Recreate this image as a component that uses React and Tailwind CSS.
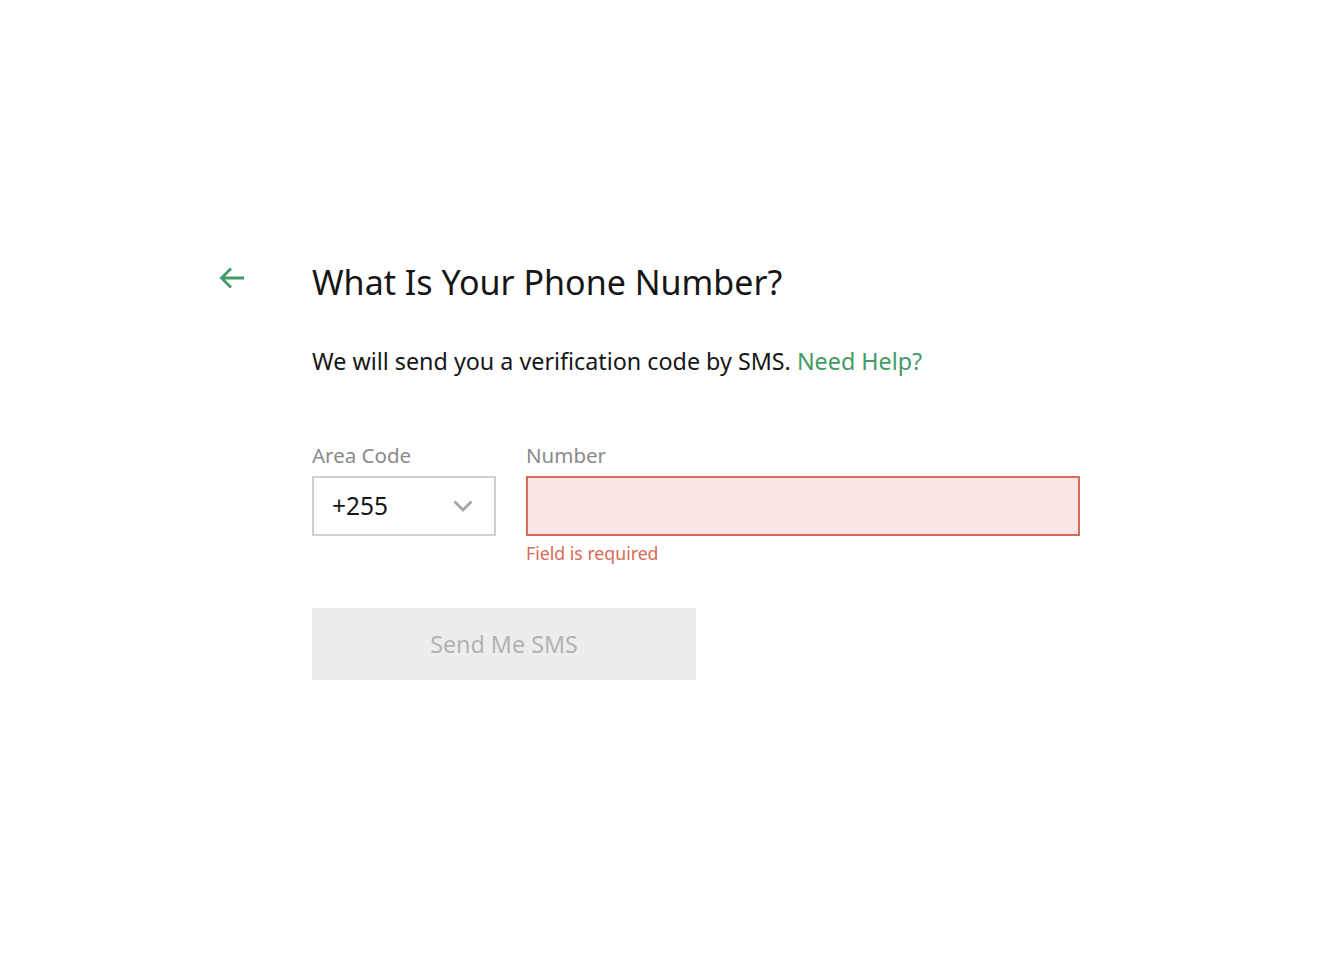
import React from 'react';

export default function App() {
  return (
    <div className="min-h-[956px] w-full bg-white font-['Noto_Sans',sans-serif]">
      <div className="flex pt-[262px] pl-[218px]">
        {/* Back arrow */}
        <button className="w-[94px] h-[30px] flex items-start pt-[3px] text-[#429b66]">
          <svg width="28" height="26" viewBox="0 0 28 26" fill="none">
            <path d="M26 13H4M13 3.5L3.5 13l9.5 9.5" stroke="currentColor" strokeWidth="2.8" />
          </svg>
        </button>

        <div className="flex flex-col">
          <h1 className="text-[34px] leading-[40px] text-[#161616]">What Is Your Phone Number?</h1>
          <p className="mt-[44px] text-[23.3px] leading-[30px] text-[#161616]">
            We will send you a verification code by SMS. <a className="text-[#429b66]">Need Help?</a>
          </p>

          <div className="mt-[66px] flex gap-[30px]">
            <div className="flex flex-col">
              <label className="text-[20.5px] leading-[26px] text-[#8a8a8a]">Area Code</label>
              <div className="mt-[8px] w-[184px] h-[60px] border-2 border-[#d0d0d0] flex items-center justify-between pl-[18px] pr-[21px]">
                <span className="text-[24.5px] text-[#161616]">+255</span>
                <svg width="20" height="12" viewBox="0 0 20 12" fill="none">
                  <path d="M1.5 1.5l8.5 8.5 8.5-8.5" stroke="#a6a6a6" strokeWidth="2.8" />
                </svg>
              </div>
            </div>
            <div className="flex flex-col">
              <label className="text-[20.5px] leading-[26px] text-[#8a8a8a]">Number</label>
              <input className="mt-[8px] w-[554px] h-[60px] border-2 border-[#d66b57] bg-[#fbe6e5] outline-none px-4 text-[22px]" />
              <span className="mt-[5px] text-[17.7px] leading-[24px] text-[#d66b57]">Field is required</span>
            </div>
          </div>

          <button className="mt-[43px] w-[384px] h-[72px] bg-[#ededed] text-[23.3px] text-[#b3b3b3]">Send Me SMS</button>
        </div>
      </div>
    </div>
  );
}
